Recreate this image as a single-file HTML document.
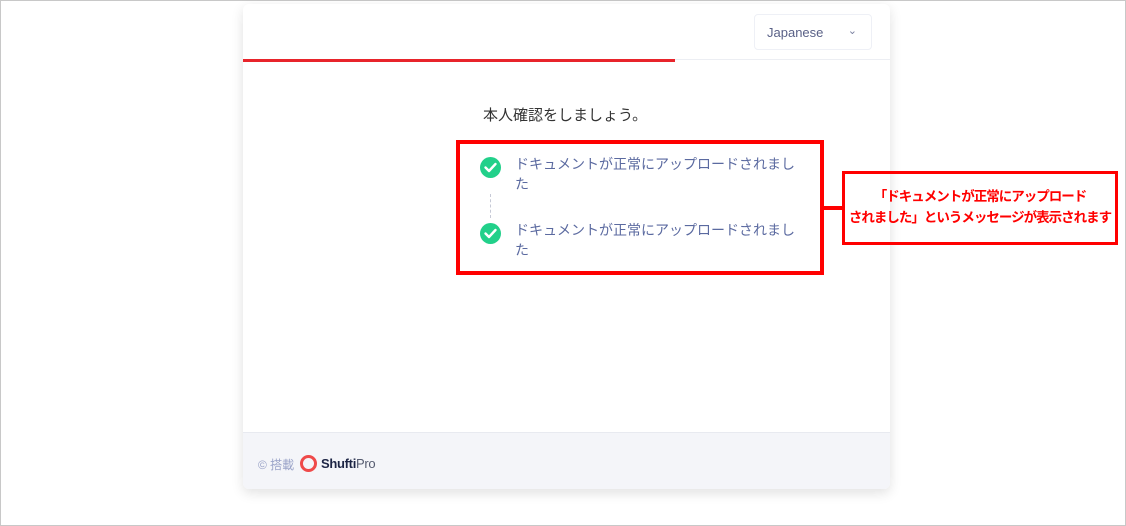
<!DOCTYPE html>
<html><head><meta charset="utf-8"><style>
*{box-sizing:border-box;margin:0;padding:0}
body{width:1126px;height:526px;background:#fff;font-family:"Liberation Sans","Noto Sans CJK JP",sans-serif;position:relative;overflow:hidden}
.frame{position:absolute;left:0;top:0;width:1126px;height:526px;border:1px solid #c8c8c8}
.card{position:absolute;left:243px;top:4px;width:647px;height:485px;background:#fff;border-radius:6px;box-shadow:0 4px 12px rgba(0,0,0,.12);overflow:hidden}
.hdr{position:absolute;left:0;top:0;width:647px;height:56px;border-bottom:1px solid #eceef3}
.prog{position:absolute;left:0;top:55px;width:432px;height:3px;background:#e8242b}
.sel{position:absolute;left:511px;top:10px;width:118px;height:36px;border:1px solid #eef0f6;border-radius:4px;font-size:13px;color:#5a6187;padding:10px 0 0 12px}
.sel span{position:absolute;right:14px;top:9px;font-size:11px;color:#7a80a0}
.title{position:absolute;left:240px;top:100px;font-size:15px;color:#333}
.item{position:absolute;left:237px;font-size:14px;color:#5b6aa0;line-height:20px}
.item .ic{position:absolute;left:0;top:3px;width:21px;height:21px;border-radius:50%;background:#22d08a}
.item .t{position:absolute;left:35px;top:0;width:320px;white-space:nowrap}
.dash{position:absolute;left:247px;top:190px;height:24px;border-left:1px dashed #c6c9d6}
.foot{position:absolute;left:0;top:428px;width:647px;height:57px;background:#f4f5f9;border-top:1px solid #e8eaf0}
.box1{position:absolute;left:456px;top:140px;width:368px;height:135px;border:4px solid #ff0000}
.conn{position:absolute;left:824px;top:206px;width:20px;height:4px;background:#ff0000}
.box2{position:absolute;left:842px;top:171px;width:276px;height:74px;border:3px solid #ff0000;color:#ff0000;font-weight:bold;font-size:13.5px;text-align:center;line-height:21px;padding-top:12px;letter-spacing:-1px;white-space:nowrap}
</style></head><body>
<div class="frame"></div>
<div class="card">
 <div class="hdr"></div><div class="prog"></div>
 <div class="sel">Japanese<span>&#8964;</span></div>
 <div class="title">本人確認をしましょう。</div>
 <div class="item" style="top:150px"><div class="ic"><svg width="21" height="21" viewBox="0 0 21 21"><path d="M5.5 10.5l3.5 3.5 6.5-7" fill="none" stroke="#fff" stroke-width="2.4" stroke-linecap="round" stroke-linejoin="round"/></svg></div><div class="t">ドキュメントが正常にアップロードされまし<br>た</div></div>
 <div class="dash"></div>
 <div class="item" style="top:216px"><div class="ic"><svg width="21" height="21" viewBox="0 0 21 21"><path d="M5.5 10.5l3.5 3.5 6.5-7" fill="none" stroke="#fff" stroke-width="2.4" stroke-linecap="round" stroke-linejoin="round"/></svg></div><div class="t">ドキュメントが正常にアップロードされまし<br>た</div></div>
 <div class="foot">
  <div style="position:absolute;left:15px;top:23px;font-size:12px;color:#9aa3c8">© 搭載</div>
  <div style="position:absolute;left:57px;top:22px;width:17px;height:17px;border-radius:50%;border:3.5px solid #ef4a4a"></div>
  <div style="position:absolute;left:78px;top:23px;font-size:13px;color:#1d2545;font-weight:bold;letter-spacing:-0.3px">Shufti<span style="font-weight:normal;color:#555b70">Pro</span></div>
 </div>
</div>
<div class="box1"></div>
<div class="conn"></div>
<div class="box2">「ドキュメントが正常にアップロード<br>されました」というメッセージが表示されます</div>
</body></html>
